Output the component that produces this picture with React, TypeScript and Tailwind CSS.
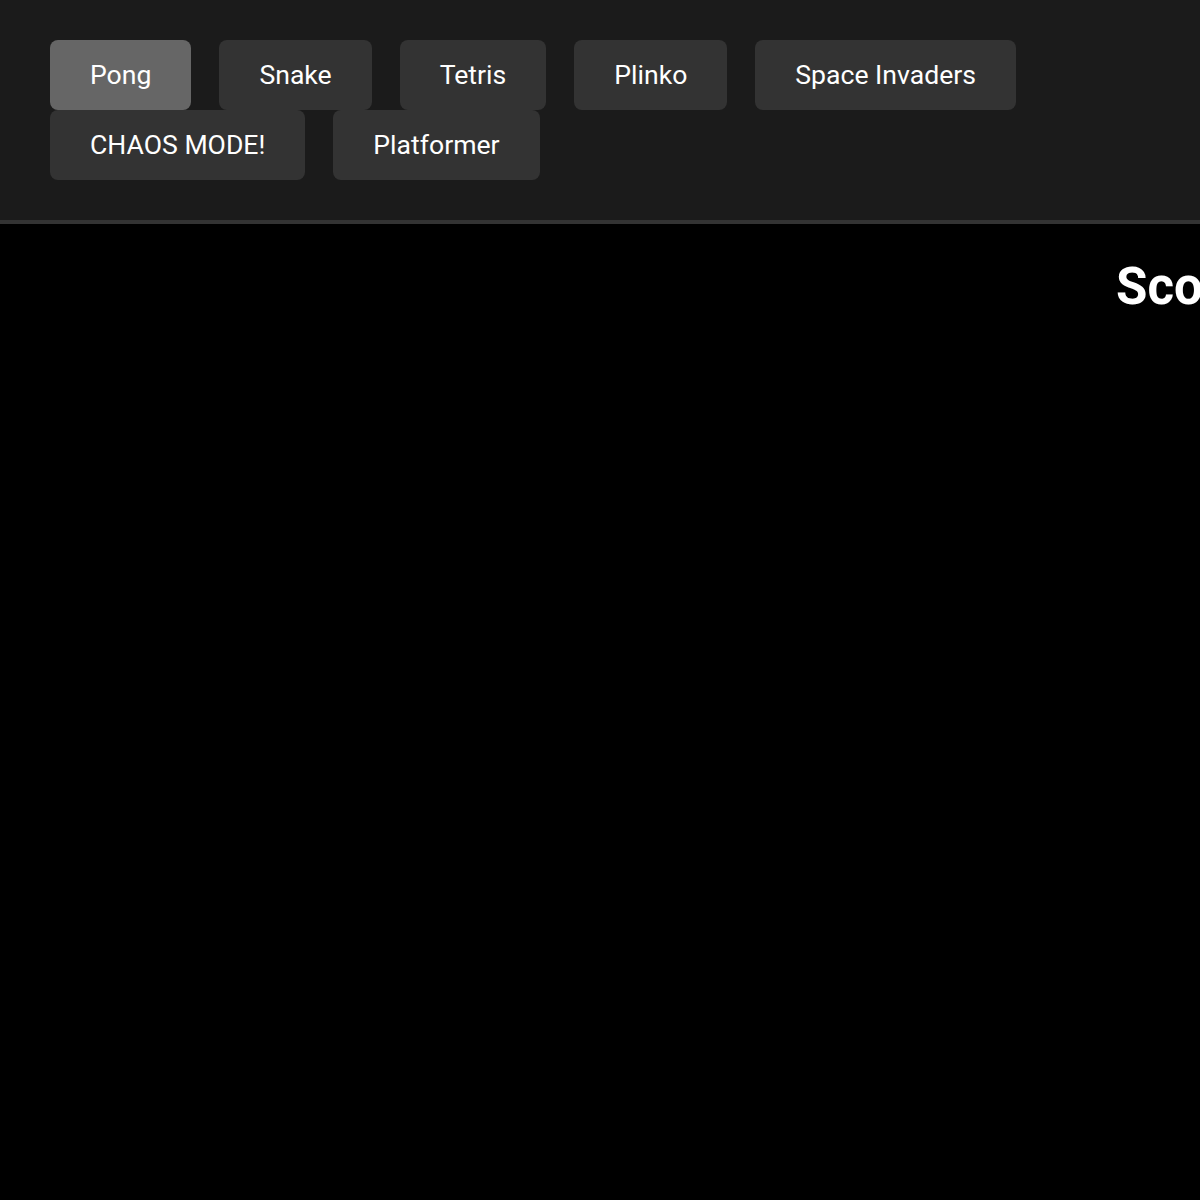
import { useState } from 'react'

const games = ['Pong', 'Snake', 'Tetris', 'Plinko', 'Space Invaders', 'CHAOS MODE!', 'Platformer']

export default function App() {
  const [active, setActive] = useState('Pong')

  return (
    <div className="min-h-[1200px] bg-black font-['Roboto',sans-serif] overflow-hidden">
      <nav className="flex flex-wrap gap-x-[28px] bg-[#1b1b1b] px-[50px] pt-[40px] pb-[40px] border-b-4 border-[#333333]">
        {games.map((game) => (
          <button
            key={game}
            onClick={() => setActive(game)}
            className={`h-[70px] px-[40px] rounded-lg text-[26.6px] text-white leading-none ${
              active === game ? 'bg-[#666666]' : 'bg-[#333333]'
            }`}
          >
            {game}
          </button>
        ))}
      </nav>

      <main className="relative h-[976px] bg-black">
        {/* score overlay on top of the game canvas */}
        <div className="absolute left-[1116px] top-[37px] whitespace-nowrap text-[51px] font-bold text-white leading-none">
          Score: 0
        </div>
      </main>
    </div>
  )
}
